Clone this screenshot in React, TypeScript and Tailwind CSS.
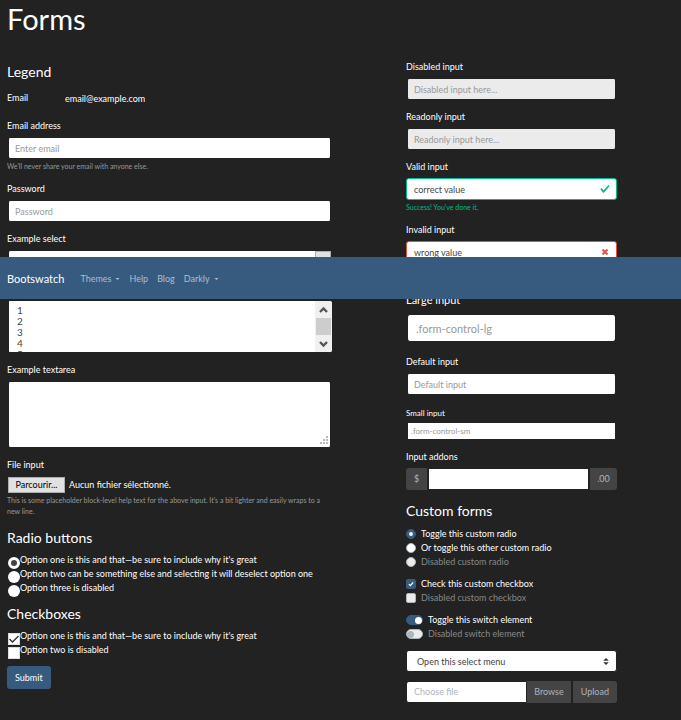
import type { ReactNode } from "react";

const control =
  "block h-[22px] w-full appearance-none rounded-[3px] text-[9px] leading-[15px] text-[#444] outline-none placeholder:text-[#999]";
const plain = "border-x-2 border-y border-[#222] bg-white px-[6px]";
const muted = "border-x-2 border-y border-[#222] bg-[#ebebeb] px-[6px]";

function Field({ id, label, help, helpClass = "text-[#999]", children }: {
  id: string;
  label: string;
  help?: string;
  helpClass?: string;
  children: ReactNode;
}) {
  return (
    <div className="mb-[9px]">
      <label htmlFor={id} className="mb-1 block leading-[15px]">{label}</label>
      {children}
      {help && <small className={`mt-[2px] block text-[7px] leading-[11px] ${helpClass}`}>{help}</small>}
    </div>
  );
}

function Heading({ children }: { children: ReactNode }) {
  return <legend className="text-[14px] leading-[18px]">{children}</legend>;
}

function PlainRadio({ id, label, checked, disabled }: { id: string; label: string; checked?: boolean; disabled?: boolean }) {
  return (
    <div className="flex h-[14px]">
      <span className="grid h-[18px] w-[13px] shrink-0 place-items-center">
        <input id={id} type="radio" name="plain" defaultChecked={checked} disabled={disabled}
          className="col-start-1 row-start-1 mt-[2px] size-[12px] appearance-none rounded-full bg-white checked:border-[3px] checked:border-white checked:bg-[#444]" />
      </span>
      <label htmlFor={id} className="leading-[14px]">{label}</label>
    </div>
  );
}

function PlainCheck({ id, label, checked, disabled }: { id: string; label: string; checked?: boolean; disabled?: boolean }) {
  return (
    <div className="flex h-[14px]">
      <span className="grid h-[18px] w-[13px] shrink-0 place-items-center">
        <input id={id} type="checkbox" defaultChecked={checked} disabled={disabled}
          className="col-start-1 row-start-1 mt-[2px] size-[12px] appearance-none border border-[#ddd] bg-white" />
        {checked && (
          <svg viewBox="0 0 12 12" className="pointer-events-none col-start-1 row-start-1 mt-[2px] size-[12px]" fill="none" stroke="#333" strokeWidth="1.4">
            <path d="M1.5 6 L4.5 9 L10.5 3" />
          </svg>
        )}
      </span>
      <label htmlFor={id} className="leading-[14px]">{label}</label>
    </div>
  );
}

function CustomChoice({ id, type, label, checked, disabled }: {
  id: string;
  type: "radio" | "checkbox";
  label: string;
  checked?: boolean;
  disabled?: boolean;
}) {
  return (
    <div className="flex h-[14px] items-center gap-[5px]">
      <span className="grid size-[10px] place-items-center">
        <input id={id} type={type} name={type === "radio" ? "custom" : id} defaultChecked={checked} disabled={disabled}
          className={`col-start-1 row-start-1 size-[10px] appearance-none border border-[#adb5bd] bg-white checked:border-[#375a7f] checked:bg-[#375a7f] disabled:bg-[#ebebeb] ${type === "radio" ? "rounded-full" : "rounded-[2px]"}`} />
        {checked && (
          <svg viewBox="0 0 10 10" className="pointer-events-none col-start-1 row-start-1 size-[10px]">
            {type === "radio" ? <circle cx="5" cy="5" r="1.9" fill="#fff" /> : <path d="M2.9 5.1 L4.4 6.6 L7.2 3.4" fill="none" stroke="#fff" strokeWidth="1.3" />}
          </svg>
        )}
      </span>
      <label htmlFor={id} className={`leading-[14px] ${disabled ? "text-[#888]" : ""}`}>{label}</label>
    </div>
  );
}

function Switch({ id, label, checked, disabled }: { id: string; label: string; checked?: boolean; disabled?: boolean }) {
  return (
    <div className="flex h-[14px] items-center gap-[5px]">
      <span className="grid h-[10px] w-[17px] items-center">
        <input id={id} type="checkbox" role="switch" defaultChecked={checked} disabled={disabled}
          className="peer col-start-1 row-start-1 h-[10px] w-[17px] appearance-none rounded-full border border-[#adb5bd] bg-white checked:border-[#375a7f] checked:bg-[#375a7f] disabled:bg-[#ebebeb]" />
        <span className="pointer-events-none col-start-1 row-start-1 ml-px size-[7px] rounded-full bg-[#adb5bd] peer-checked:ml-[9px] peer-checked:bg-white" />
      </span>
      <label htmlFor={id} className={`leading-[14px] ${disabled ? "text-[#888]" : ""}`}>{label}</label>
    </div>
  );
}

function Caret() {
  return <svg viewBox="0 0 6 3" className="ml-1 h-[2px] w-[5px]" fill="currentColor"><path d="M0 0h6L3 3z" /></svg>;
}

function Navbar() {
  return (
    <nav className="absolute inset-x-0 top-[257px] z-10 flex h-[42px] items-center gap-[9px] bg-[#375a7f] px-[7px] pt-px text-[#afbdcc]">
      <a href="#" className="mr-[7px] text-[11px] leading-[18px] text-white">Bootswatch</a>
      <a href="#" className="flex items-center">Themes<Caret /></a>
      <a href="#">Help</a>
      <a href="#">Blog</a>
      <a href="#" className="flex items-center">Darkly<Caret /></a>
    </nav>
  );
}

function LeftColumn() {
  return (
    <form>
      <fieldset>
        <Heading>Legend</Heading>
        <div className="mt-[9px] mb-[6px] flex h-[22px] items-start leading-[15px]">
          <label htmlFor="static-email" className="w-[51px] shrink-0">Email</label>
          <input id="static-email" readOnly defaultValue="email@example.com" className="h-4 min-w-0 flex-1 bg-transparent px-[7px] outline-none" />
        </div>
        <Field id="email" label="Email address" help="We'll never share your email with anyone else.">
          <input id="email" type="email" placeholder="Enter email" className={`${control} ${plain}`} />
        </Field>
        <Field id="password" label="Password">
          <input id="password" type="password" placeholder="Password" className={`${control} ${plain}`} />
        </Field>
        <Field id="select" label="Example select">
          <div className="grid">
            <select id="select" className={`${control} ${plain} col-start-1 row-start-1`} />
            <span className="pointer-events-none col-start-1 row-start-1 my-px mr-px w-[16px] justify-self-end border border-[#adadad] bg-[#e1e1e1]" />
          </div>
        </Field>
        <div className="mt-[28px] mb-[9px] flex h-[53px] overflow-hidden rounded-[3px] border-y border-l-2 border-[#222] bg-white">
          <select aria-label="Example multiple select" multiple size={4} className="h-[51px] min-w-0 flex-1 appearance-none overflow-hidden bg-white px-[6px] pt-[3px] text-[10px] text-[#444] outline-none">
            {[1, 2, 3, 4, 5].map((n) => (
              <option key={n} className="h-[11px] min-h-0 px-[2px] py-0 leading-[11px]">{n}</option>
            ))}
          </select>
          <div className="flex w-[17px] flex-col items-center bg-[#f0f0f0]">
            <svg viewBox="0 0 17 17" className="size-[17px]" fill="none" stroke="#555" strokeWidth="2.4"><path d="M5 11 L8.500 7.500 L12 11" /></svg>
            <div className="w-[15px] flex-1 bg-[#cdcdcd]" />
            <svg viewBox="0 0 17 17" className="size-[17px]" fill="none" stroke="#555" strokeWidth="2.4"><path d="M5 7 L8.500 10.500 L12 7" /></svg>
          </div>
        </div>
        <Field id="area" label="Example textarea">
          <div className="grid">
            <textarea id="area" className="col-start-1 row-start-1 block h-[67px] w-full resize-none rounded-[3px] border-x-2 border-y border-[#222] bg-white px-[6px] py-1 text-[#444] outline-none" />
            <svg viewBox="0 0 9 9" className="pointer-events-none col-start-1 row-start-1 mr-[3px] mb-[3px] size-[9px] self-end justify-self-end" fill="#bbb">
              <path d="M6 0h2v2H6zM3 3h2v2H3zM6 3h2v2H6zM0 6h2v2H0zM3 6h2v2H3zM6 6h2v2H6z" />
            </svg>
          </div>
        </Field>
        <Field id="file" label="File input" help="This is some placeholder block-level help text for the above input. It's a bit lighter and easily wraps to a new line.">
          <div className="flex h-[17px] items-center gap-1 pl-px">
            <input id="file" type="file" className="sr-only" />
            <button type="button" className="h-[16px] w-[57px] border border-[#adadad] bg-[#e1e1e1] leading-[13px] text-black">Parcourir...</button>
            <span>Aucun fichier sélectionné.</span>
          </div>
        </Field>
      </fieldset>
      <fieldset className="mt-[3px]">
        <Heading>Radio buttons</Heading>
        <div className="mt-[6px]">
          <PlainRadio id="r1" label="Option one is this and that—be sure to include why it's great" checked />
          <PlainRadio id="r2" label="Option two can be something else and selecting it will deselect option one" />
          <PlainRadio id="r3" label="Option three is disabled" disabled />
        </div>
      </fieldset>
      <fieldset className="mt-[10px]">
        <Heading>Checkboxes</Heading>
        <div className="mt-[6px]">
          <PlainCheck id="c1" label="Option one is this and that—be sure to include why it's great" checked />
          <PlainCheck id="c2" label="Option two is disabled" disabled />
        </div>
      </fieldset>
      <button type="submit" className="mt-[9px] h-[23px] rounded-[3px] bg-[#375a7f] px-2 leading-[15px] text-white">Submit</button>
    </form>
  );
}

function RightColumn() {
  return (
    <form className="-mt-1">
      <Field id="disabled" label="Disabled input">
        <input id="disabled" disabled placeholder="Disabled input here..." className={`${control} ${muted}`} />
      </Field>
      <Field id="readonly" label="Readonly input">
        <input id="readonly" readOnly placeholder="Readonly input here..." className={`${control} ${muted}`} />
      </Field>
      <Field id="valid" label="Valid input" help="Success! You've done it." helpClass="text-[#00bc8c]">
        <div className="grid items-center">
          <input id="valid" defaultValue="correct value" className={`${control} col-start-1 row-start-1 border border-[#00bc8c] bg-white px-[7px]`} />
          <svg viewBox="0 0 8 8" className="pointer-events-none col-start-1 row-start-1 mr-[7px] size-[10px] justify-self-end" fill="#00bc8c">
            <path d="M2.3 6.73L.6 4.53c-.4-1.04.46-1.4 1.1-.8l1.1 1.4 3.4-3.8c.6-.63 1.6-.27 1.2.7l-4 4.6c-.43.5-.8.4-1.1.1z" />
          </svg>
        </div>
      </Field>
      <Field id="invalid" label="Invalid input">
        <div className="grid items-center">
          <input id="invalid" defaultValue="wrong value" className={`${control} col-start-1 row-start-1 border border-[#e74c3c] bg-white px-[7px]`} />
          <svg viewBox="0 0 8 8" className="pointer-events-none col-start-1 row-start-1 mr-2 size-[8px] justify-self-end" fill="none" stroke="#e74c3c" strokeWidth="1.800">
            <path d="M1.500 1.500l5 5M6.500 1.500l-5 5" />
          </svg>
        </div>
      </Field>
      <div className="mt-[28px]">
        <label htmlFor="lg" className="mb-[5px] block text-[11px] leading-[18px]">Large input</label>
        <input id="lg" placeholder=".form-control-lg" className="block h-[28px] w-full rounded-[4px] border-x-2 border-y border-[#222] bg-white px-2 text-[11px] text-[#444] outline-none placeholder:text-[#999]" />
      </div>
      <div className="mt-3">
        <label htmlFor="md" className="mb-1 block leading-[15px]">Default input</label>
        <input id="md" placeholder="Default input" className={`${control} ${plain}`} />
      </div>
      <div className="mt-3 mb-[9px]">
        <label htmlFor="sm" className="mb-[3px] block text-[8px] leading-[12px]">Small input</label>
        <input id="sm" placeholder=".form-control-sm" className="block h-[18px] w-full rounded-[2px] border-x-2 border-y border-[#222] bg-white px-[3px] text-[8px] text-[#444] outline-none placeholder:text-[#999]" />
      </div>
      <Field id="amount" label="Input addons">
        <div className="flex h-[22px] leading-[22px] text-[#adb5bd]">
          <span className="w-[21px] rounded-l-[3px] bg-[#444] text-center">$</span>
          <input id="amount" className="mx-px min-w-0 flex-1 border border-[#222] bg-white px-[7px] text-[#444] outline-none" />
          <span className="w-[27px] rounded-r-[3px] bg-[#444] text-center">.00</span>
        </div>
      </Field>
      <fieldset className="mt-3">
        <Heading>Custom forms</Heading>
        <div className="mt-[7px]">
          <CustomChoice id="cr1" type="radio" label="Toggle this custom radio" checked />
          <CustomChoice id="cr2" type="radio" label="Or toggle this other custom radio" />
          <CustomChoice id="cr3" type="radio" label="Disabled custom radio" disabled />
        </div>
        <div className="mt-2">
          <CustomChoice id="cc1" type="checkbox" label="Check this custom checkbox" checked />
          <CustomChoice id="cc2" type="checkbox" label="Disabled custom checkbox" disabled />
        </div>
        <div className="mt-2">
          <Switch id="sw1" label="Toggle this switch element" checked />
          <Switch id="sw2" label="Disabled switch element" disabled />
        </div>
        <div className="mt-[9px] grid items-center">
          <select aria-label="Open this select menu" className="col-start-1 row-start-1 h-[22px] w-full appearance-none rounded-[3px] border border-[#222] bg-white px-[10px] text-[9px] text-[#444] outline-none">
            <option>Open this select menu</option>
          </select>
          <svg viewBox="0 0 4 5" className="pointer-events-none col-start-1 row-start-1 mr-2 h-[7px] w-[6px] justify-self-end" fill="#333"><path d="M2 0L0 2h4zm0 5L0 3h4z" /></svg>
        </div>
        <div className="mt-[9px] flex h-[22px] leading-[22px] text-[#adb5bd]">
          <input id="upload" type="file" className="sr-only" />
          <label htmlFor="upload" className="flex min-w-0 flex-1">
            <span className="flex-1 rounded-l-[3px] border border-[#222] bg-white px-[7px] leading-[20px]">Choose file</span>
            <span className="bg-[#444] px-[7px]">Browse</span>
          </label>
          <button type="button" className="ml-[2px] rounded-r-[3px] bg-[#444] px-2 leading-[22px]">Upload</button>
        </div>
      </fieldset>
    </form>
  );
}

export default function App() {
  return (
    <main className="relative min-h-screen bg-[#222] px-[7px] pb-4 font-['Lato',sans-serif] text-[9px] leading-[15px] text-white">
      <Navbar />
      <h1 className="text-[29px] leading-[38px]">Forms</h1>
      <div className="mt-[25px] grid grid-cols-[325fr_74fr_211fr_57fr]">
        <LeftColumn />
        <div className="col-start-3">
          <RightColumn />
        </div>
      </div>
    </main>
  );
}
